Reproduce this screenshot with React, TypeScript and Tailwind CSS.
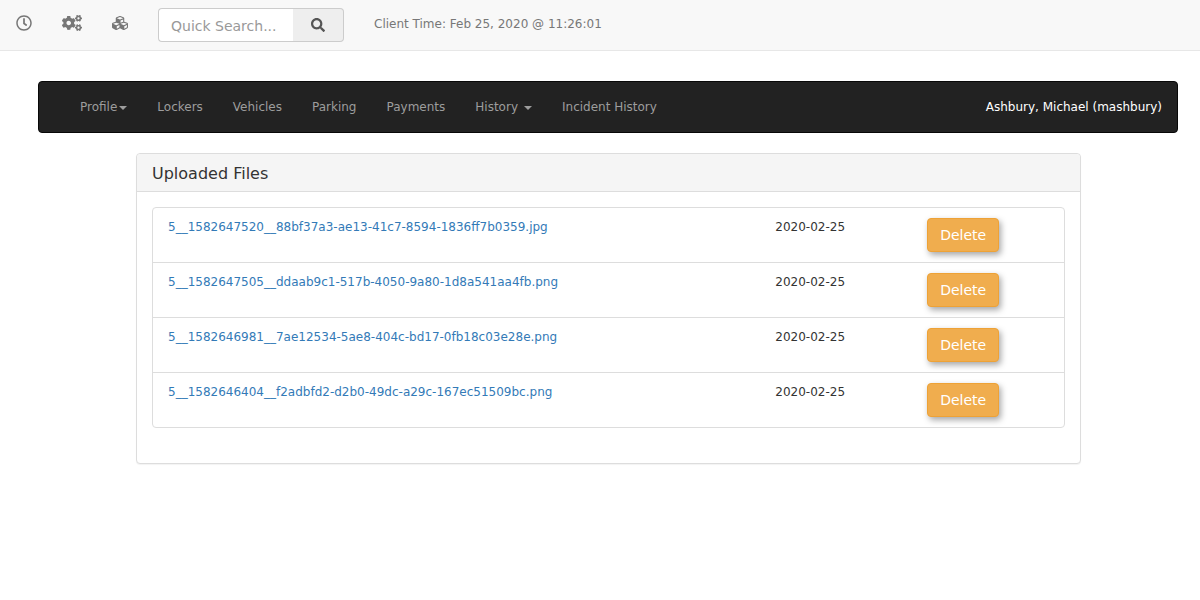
import { FaCogs, FaCubes, FaRegClock, FaSearch } from "react-icons/fa";

type NavItem = { label: string; caret?: "tight" | "spaced" };

const navItems: NavItem[] = [
  { label: "Profile", caret: "tight" },
  { label: "Lockers" },
  { label: "Vehicles" },
  { label: "Parking" },
  { label: "Payments" },
  { label: "History", caret: "spaced" },
  { label: "Incident History" },
];

const files = [
  { name: "5__1582647520__88bf37a3-ae13-41c7-8594-1836ff7b0359.jpg", date: "2020-02-25" },
  { name: "5__1582647505__ddaab9c1-517b-4050-9a80-1d8a541aa4fb.png", date: "2020-02-25" },
  { name: "5__1582646981__7ae12534-5ae8-404c-bd17-0fb18c03e28e.png", date: "2020-02-25" },
  { name: "5__1582646404__f2adbfd2-d2b0-49dc-a29c-167ec51509bc.png", date: "2020-02-25" },
];

function Caret({ spaced }: { spaced: boolean }) {
  return (
    <span
      className={`${spaced ? "ml-1.5" : "ml-0.5"} mt-0.5 h-0 w-0 border-x-4 border-t-4 border-x-transparent border-t-current`}
    />
  );
}

function TopBar() {
  return (
    <header className="flex items-start border-b border-[#e7e7e7] bg-[#f8f8f8] pt-2 pb-2 pl-4 text-[#777]">
      <div className="flex h-[30px] items-center">
        <a href="#clock" aria-label="Clock" className="w-[46px]">
          <FaRegClock size={16} />
        </a>
        <a href="#settings" aria-label="Settings" className="w-[50px]">
          <FaCogs size={20} />
        </a>
        <a href="#modules" aria-label="Modules" className="w-[46px]">
          <FaCubes size={16} />
        </a>
      </div>
      <form className="flex h-[34px]" onSubmit={(e) => e.preventDefault()}>
        <input
          type="text"
          aria-label="Quick Search"
          placeholder="Quick Search..."
          className="w-[135px] rounded-l border border-r-0 border-[#ccc] bg-white px-3 pt-0.5 text-sm text-[#555] placeholder:text-[#999]"
        />
        <button
          type="submit"
          aria-label="Search"
          className="flex w-[51px] items-center justify-center rounded-r border border-l-0 border-[#ccc] bg-[#eee] text-[#555]"
        >
          <FaSearch size={14} />
        </button>
      </form>
      <p className="ml-[30px] flex h-8 items-center">Client Time: Feb 25, 2020 @ 11:26:01</p>
    </header>
  );
}

function MainNav() {
  return (
    <nav className="flex items-center justify-between rounded border border-[#080808] bg-[#222] py-4 pr-[15px] pl-[41px] leading-[18px]">
      <ul className="flex gap-[30px] text-[#9d9d9d]">
        {navItems.map((item) => (
          <li key={item.label}>
            <a href="#" className="flex items-center">
              {item.label}
              {item.caret && <Caret spaced={item.caret === "spaced"} />}
            </a>
          </li>
        ))}
      </ul>
      <a href="#" className="text-white">
        Ashbury, Michael (mashbury)
      </a>
    </nav>
  );
}

function UploadedFiles() {
  return (
    <section className="mt-5 mr-[97px] ml-[98px] rounded border border-[#ddd] bg-white shadow-[0_1px_1px_rgba(0,0,0,0.05)]">
      <h1 className="rounded-t border-b border-[#ddd] bg-[#f5f5f5] px-[15px] pt-2.5 pb-2 text-base leading-[19px]">
        Uploaded Files
      </h1>
      <div className="px-[15px] pt-[15px] pb-[35px]">
        <div className="rounded border border-[#ddd]">
          <table className="w-full table-fixed border-separate border-spacing-0">
            <colgroup>
              <col className="w-8/12" />
              <col className="w-2/12" />
              <col className="w-2/12" />
            </colgroup>
            <tbody className="[&>tr:not(:last-child)>td]:border-b [&>tr:not(:last-child)>td]:border-[#ddd]">
              {files.map((file) => (
                <tr key={file.name}>
                  <td className="px-[15px] py-2.5 align-top leading-[18px]">
                    <a href="#" className="text-[#337ab7]">
                      {file.name}
                    </a>
                  </td>
                  <td className="px-[15px] py-2.5 align-top leading-[18px]">{file.date}</td>
                  <td className="px-[15px] py-2.5 align-top">
                    <button
                      type="button"
                      className="block h-[34px] rounded border border-[#eea236] bg-[#f0ad4e] px-3 text-sm text-white shadow-[2px_3px_6px_rgba(0,0,0,0.35)]"
                    >
                      Delete
                    </button>
                  </td>
                </tr>
              ))}
            </tbody>
          </table>
        </div>
      </div>
    </section>
  );
}

export default function App() {
  return (
    <div className="min-h-screen bg-white font-['Verdana','DejaVu_Sans',sans-serif] text-xs text-[#333]">
      <TopBar />
      <main className="pt-[30px] pr-[22px] pl-[38px]">
        <MainNav />
        <UploadedFiles />
      </main>
    </div>
  );
}
